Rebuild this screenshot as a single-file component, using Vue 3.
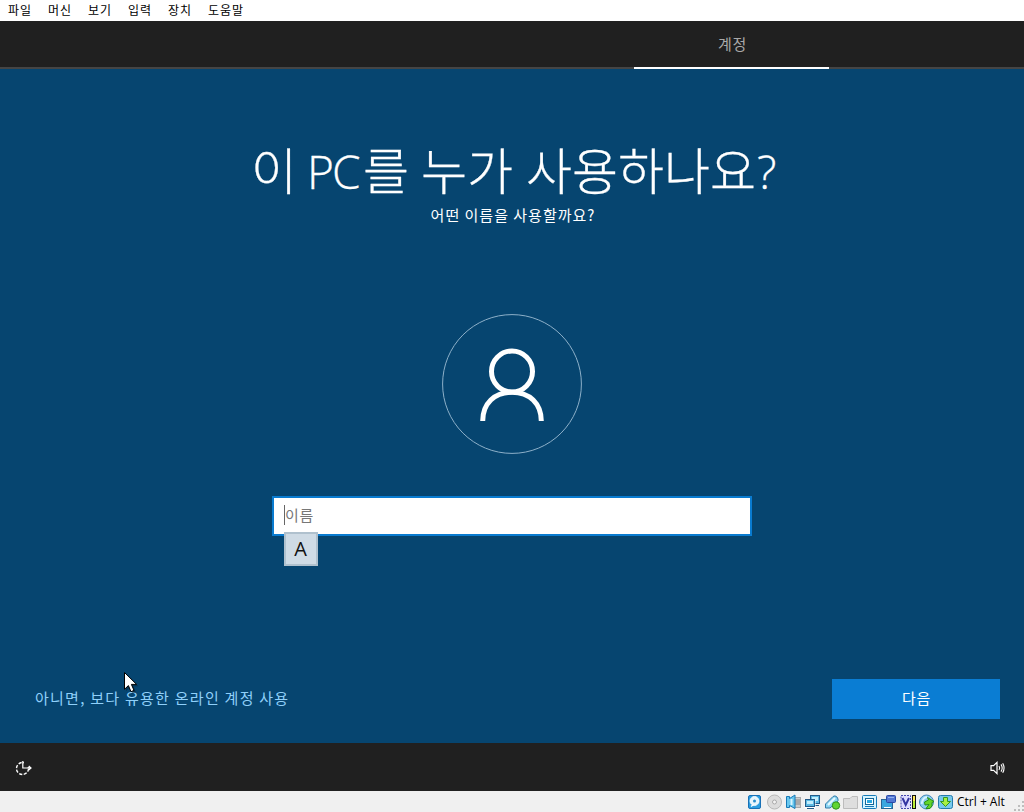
<script setup>
const menus = [['파일', 40], ['머신', 40], ['보기', 40], ['입력', 40], ['장치', 40], ['도움말', 50]]
</script>

<template>
  <div class="window">
    <nav class="menu"><span v-for="m in menus" :key="m[0]" :style="{ width: m[1] + 'px' }">{{ m[0] }}</span></nav>
    <header class="tabs"><div class="tab">계정</div></header>
    <main class="setup">
      <h1><span class="w1">이</span><span class="latin">PC</span><span class="w2">를</span><span class="w3">누가</span><span class="w4">사용하나요</span><span class="latin q">?</span></h1>
      <p class="sub">어떤 이름을 사용할까요?</p>
      <svg class="avatar" width="142" height="142" viewBox="0 0 142 142" fill="none" stroke="#fff">
        <circle cx="71" cy="71" r="69.4" stroke="#8db0c9" stroke-width="1" />
        <circle cx="71" cy="58.5" r="20.5" stroke-width="5" />
        <path d="M41.7 108C41.7 90.5 53.5 79.2 71 79.2S100.3 90.5 100.3 108" stroke-width="5" />
      </svg>
      <div class="field"><i class="caret"></i><span>이름</span><div class="ime">A</div></div>
      <div class="actions">
        <a class="link">아니면, 보다 유용한 온라인 계정 사용</a>
        <button class="next">다음</button>
      </div>
      <svg class="cursor" width="18" height="26" viewBox="0 0 18 26">
        <path d="M2 3V19L5.8 15.5L8.5 21.8L12 20.2L9.3 14.2H14.5Z" fill="#02182b" opacity=".45" />
        <path d="M.5 .5V17.3L4.4 13.6L7 19.7L10 18.4L7.4 12.4H12.6Z" fill="#fff" stroke="#000" stroke-width="1" />
      </svg>
    </main>
    <footer class="taskbar">
      <svg width="18" height="18" viewBox="0 0 18 18" fill="none" stroke="#fff">
        <circle cx="7.5" cy="9.5" r="6" stroke-width="1.4" stroke-dasharray="3.2 1.5" />
        <path d="M9 .5H14.5V8H9Z" fill="#202020" stroke="none" />
        <path d="M7.8 2V9H15.7M13.7 7L16 9L13.7 11" stroke-width="1.2" />
      </svg>
      <svg width="16" height="14" viewBox="0 0 16 14" fill="none" stroke="#fff" stroke-width="1.2">
        <path d="M1 4.6H3.6L7 1.4V12.6L3.6 9.4H1Z" />
        <path d="M9 5Q10.4 7 9 9M11 3.4Q13.4 7 11 10.6" stroke-width="1.1" />
        <path d="M12.7 2.2Q15.4 7 12.7 11.8" stroke-width="1.1" />
      </svg>
    </footer>
    <div class="status">
      <svg width="208" height="18" viewBox="0 0 208 18">
        <g stroke-width="1">
          <rect x="1.5" y="2.5" width="12" height="13" rx="1.5" fill="#2c9ee0" stroke="#1870b6" />
          <circle cx="7.5" cy="8" r="4.4" fill="#e6f5fc" stroke="#fff" /><circle cx="7.5" cy="8" r="1.5" fill="#2a8dcc" /><path d="M4 13.5L6.5 11.5" stroke="#fff" stroke-width="1.5" />
          <circle cx="27.5" cy="9" r="7" fill="#dcdcdc" stroke="#b8b8b8" /><circle cx="27.5" cy="9" r="2" fill="#f3f3f3" stroke="#aaa" />
          <rect x="46.5" y="4.5" width="7" height="10" fill="#ccc" stroke="#aaa" /><path d="M48 7H53M48 9H53M48 11H53" stroke="#888" />
          <path d="M39.5 3.5H42.5V5.5L48 2V15.5L42.5 12.5V14.5H39.5Z" fill="#68c7ee" stroke="#1679b7" /><path d="M44.5 6V12" stroke="#d8f5ff" stroke-width="2" />
          <rect x="63.5" y="2.5" width="9" height="8" fill="#5dbae4" stroke="#225b89" /><rect x="65" y="4" width="6" height="4" fill="#c3eefc" /><path d="M65 12.5H72" stroke="#225b89" />
          <rect x="58.5" y="7.5" width="9" height="7" fill="#5dbae4" stroke="#fff" stroke-width="2" /><rect x="58.5" y="6.5" width="9" height="7" fill="#5dbae4" stroke="#225b89" /><rect x="60" y="8" width="6" height="3" fill="#c3eefc" /><path d="M60 15.5H67" stroke="#225b89" />
          <path d="M78.5 15V11L86 3.5Q88 2 90 4L91 6Q91.5 8 90 9L83 15Z" fill="#8bd5f2" stroke="#347ba8" /><path d="M81 12L88 5" stroke="#e5f9ff" stroke-width="2" /><circle cx="89" cy="12.5" r="3.7" fill="#61d532" stroke="#31921b" />
          <path d="M96.5 15.5V5.5H103L105 3.5H110.5V15.5Z" fill="#dedede" stroke="#bcbcbc" />
          <rect x="115.5" y="2.5" width="14" height="13" rx="1" fill="#d5f4ff" stroke="#167bb8" /><rect x="118.5" y="5.5" width="8" height="6" fill="#fff" stroke="#126798" /><rect x="120" y="7" width="5" height="3" fill="#29a8df" /><path d="M118 13.5H127" stroke="#167bb8" />
          <rect x="134.5" y="6.5" width="11" height="9" fill="#3aa7df" stroke="#276595" /><path d="M137 14.5H144" stroke="#fff" /><rect x="139.5" y="2.5" width="9" height="7" rx="1" fill="#5277d2" stroke="#2948a5" /><path d="M141 4.5H147" stroke="#94b1ef" />
          <path d="M154 2.5H163.5V15.5H154Z" fill="#dddcff" stroke="#4648ae" stroke-dasharray="2 1" /><path d="M155.5 5L158.7 12L162 5" fill="none" stroke="#3436a1" stroke-width="2" />
          <rect x="165" y="2" width="4" height="14" fill="#111" /><path d="M167 3V8" stroke="#ffe85a" stroke-width="2" /><path d="M167 8V15" stroke="#b9ef36" stroke-width="2" />
          <circle cx="179.5" cy="9" r="7" fill="#8bcef1" stroke="#4689bd" /><path d="M174.5 11Q176 4 180 4" fill="none" stroke="#d7f3ff" stroke-width="2" /><path d="M180.5 4.5L187 8.5L185 9.5Q186 13 183 15.5L179 15.5L182 11.5L178 12L177.5 9L181.5 7Z" fill="#63d52a" stroke="#278f1b" />
          <rect x="191.5" y="2.5" width="14" height="13" rx="2" fill="#77c9ec" stroke="#247bad" /><path d="M196.5 4.5H200.5V8.5H203.5L198.5 13.5L193.5 8.5H196.5Z" fill="#a8ef42" stroke="#329624" />
        </g>
      </svg>
      <span class="host">Ctrl + Alt</span>
      <svg class="grip" width="10" height="10" viewBox="0 0 10 10" fill="#bdbdbd"><path d="M8 0h2v2H8zM4 4h2v2H4zM8 4h2v2H8zM0 8h2v2H0zM4 8h2v2H4zM8 8h2v2H8z" /></svg>
    </div>
  </div>
</template>

<style>
body { margin: 0; overflow: hidden; }
</style>
<style scoped>
* { box-sizing: border-box; }
.window { width: 1024px; height: 812px; display: flex; flex-direction: column; font-family: "Noto Sans CJK KR", sans-serif; background: #064570; }
.menu { height: 21px; flex: none; display: flex; padding-left: 8px; background: #fff; color: #000; font-size: 12px; line-height: 20px; letter-spacing: .9px; white-space: nowrap; }
.tabs { height: 48px; flex: none; display: flex; background: #202020; border-bottom: 2px solid #454545; }
.tab { width: 195px; height: 48px; margin-left: 634px; padding-left: 2px; border-bottom: 2px solid #fff; color: #a9a9a9; text-align: center; font-size: 15px; line-height: 46px; letter-spacing: .8px; }
.setup { position: relative; flex: 1; min-height: 0; display: flex; flex-direction: column; align-items: center; color: #fff; }
h1 { width: 522px; height: 68px; margin: 67px 0 0; display: flex; font-size: 50px; font-weight: 300; line-height: 64px; white-space: nowrap; -webkit-text-stroke: .3px #fff; }
h1 span { flex: none; }
.latin { width: 56px; padding-top: 3px; font-family: "Open Sans"; font-size: 46px; font-weight: 300; letter-spacing: -2px; }
.w1 { width: 56px; } .w2 { width: 58px; } .w3 { width: 105px; } .w4 { width: 231px; } .q { width: 20px; }
.sub { height: 22px; margin: 0; padding-left: 2px; font-size: 15px; line-height: 22px; letter-spacing: 1px; }
.avatar { flex: none; margin-top: 87px; }
.field { position: relative; width: 480px; height: 40px; flex: none; margin-top: 41px; display: flex; align-items: center; padding-left: 10px; border: 2px solid #097bd0; background: #fff; color: #777; font-size: 15px; letter-spacing: .8px; }
.field span { margin-top: -3px; }
.caret { width: 1px; height: 20px; margin-top: -2px; background: #666; }
.ime { position: absolute; left: 10px; top: 34px; width: 34px; height: 34px; border: 2px solid #b0c1ce; background: #cfdbe5; color: #111; text-align: center; font-family: "Open Sans"; font-size: 20px; line-height: 30px; padding-right: 1px; letter-spacing: 0; }
.actions { width: 100%; margin-top: auto; padding: 0 24px 24px 34px; display: flex; align-items: center; justify-content: space-between; }
.link { padding: 0 0 3px 1px; color: #8fd0fa; font-size: 15px; letter-spacing: 1.26px; }
.next { width: 168px; height: 40px; padding: 0 0 3px 1px; border: 0; background: #0a7dd3; color: #fff; font: 15px "Noto Sans CJK KR", sans-serif; letter-spacing: .8px; }
.cursor { position: absolute; left: 124px; top: 603px; }
.taskbar { height: 48px; flex: none; display: flex; align-items: center; justify-content: space-between; padding: 2px 18px 0 15px; background: #202020; }
.status { height: 21px; flex: none; display: flex; align-items: center; padding-left: 747px; background: #f0f0f0; color: #000; font-family: "Open Sans", sans-serif; }
.status svg { flex: none; margin-top: 1px; }
.host { width: 57px; margin-left: 2px; font-size: 12px; white-space: nowrap; }
.status .grip { margin-top: 8px; }
</style>
